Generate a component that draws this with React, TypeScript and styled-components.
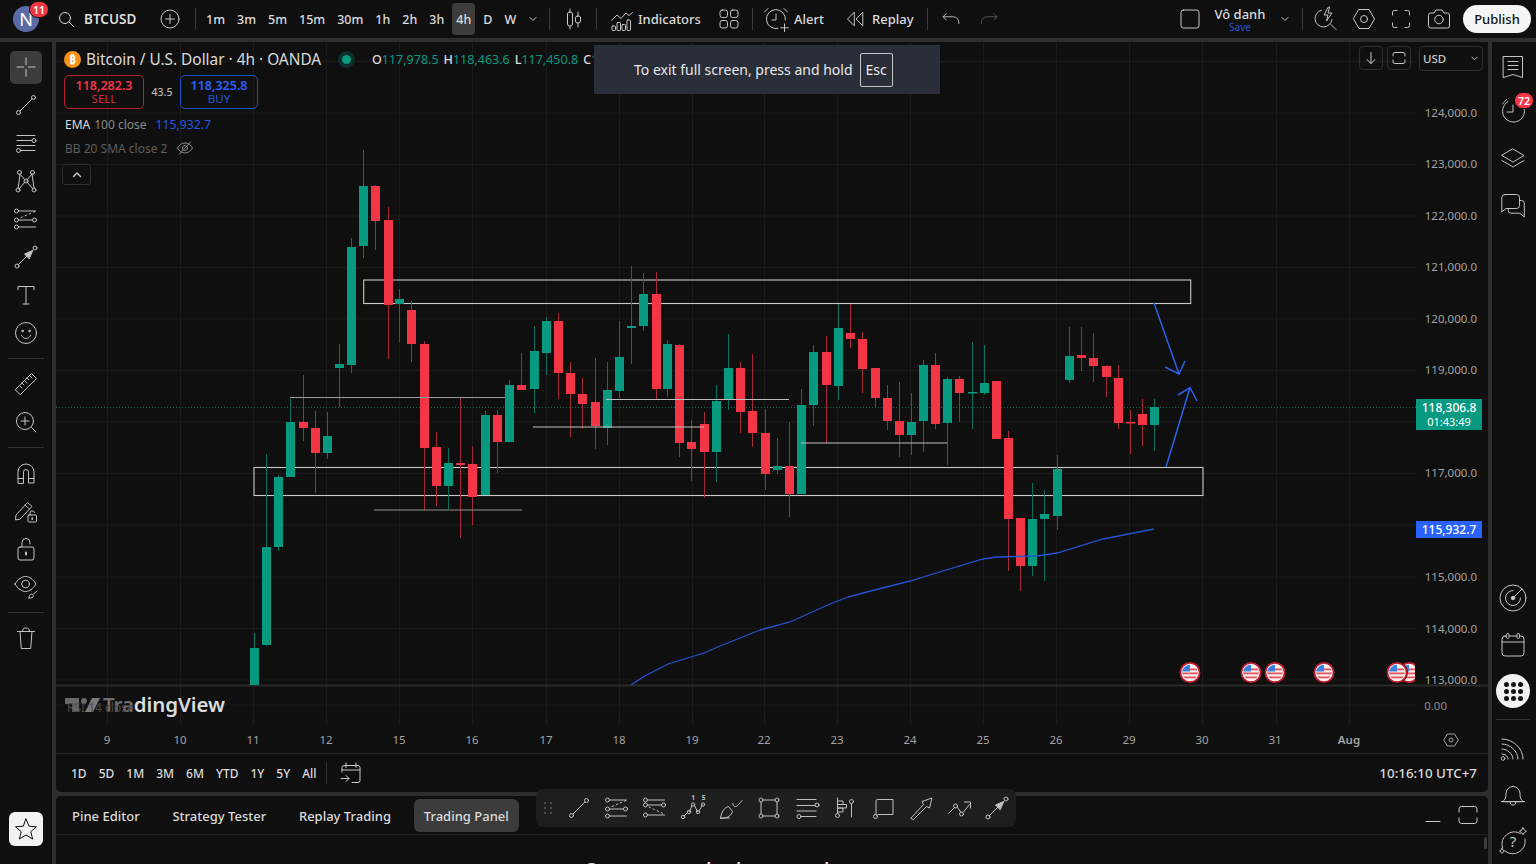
import React from 'react';
import styled, { createGlobalStyle } from 'styled-components';

const Global = createGlobalStyle`
  html, body { margin: 0; padding: 0; width: 100%; height: 100%; background: #2e2e2e; overflow: hidden; }
  #root { width: 1536px; height: 864px; }
  * { box-sizing: border-box; }
`;

const FONT = `"Noto Sans", "Open Sans", "Liberation Sans", sans-serif`;

const Page = styled.div`
  width: 1536px; height: 864px; display: flex; flex-direction: column; gap: 4px;
  background: #2e2e2e; font-family: ${FONT}; color: #dbdbdb; overflow: hidden;
`;

/* ---------- top bar ---------- */
const TopBar = styled.header`
  height: 38px; flex: none; display: flex; align-items: center; background: #0f0f0f; padding: 0 5px 0 13px;
`;
const Avatar = styled.div`
  position: relative; width: 26px; height: 26px; border-radius: 50%; background: #5a6aa6; color: #fff;
  display: flex; align-items: center; justify-content: center; font-size: 18px; flex: none;
`;
const CountBadge = styled.span<{ $right: number; $top: number }>`
  position: absolute; right: ${p => p.$right}px; top: ${p => p.$top}px; min-width: 18px; height: 17px; border-radius: 9px;
  background: #f23645; color: #fff; font-size: 10.5px; font-weight: 600; display: flex; align-items: center; justify-content: center;
  padding: 0 3px; border: 1px solid #0f0f0f;
`;
const Cell = styled.div<{ $w: number; $ml?: number; $dim?: boolean }>`
  width: ${p => p.$w}px; margin-left: ${p => p.$ml ?? 0}px; flex: none; display: flex; align-items: center; justify-content: center;
  color: ${p => (p.$dim ? '#5a5a5a' : '#c8c8c8')};
`;
const Symbol = styled.div<{ $ml: number }>`
  width: 79px; margin-left: ${p => p.$ml}px; flex: none; display: flex; align-items: center; gap: 9px;
  font-size: 13.5px; font-weight: 600; color: #dbdbdb; white-space: nowrap;
`;
const Sep = styled.div<{ $ml: number }>`
  width: 1px; height: 22px; background: #3a3a3a; margin-left: ${p => p.$ml}px; flex: none;
`;
const Intervals = styled.div`
  width: 318px; margin-left: 6px; flex: none; display: flex; align-items: center; gap: 4px;
`;
const IntervalBtn = styled.div<{ $on?: boolean }>`
  padding: 0 4px; height: 32px; display: flex; align-items: center; border-radius: 4px; font-size: 12.5px; font-weight: 500; white-space: nowrap;
  background: ${p => (p.$on ? '#3c3c3c' : 'transparent')}; color: #dbdbdb;
`;
const BarLabel = styled.div<{ $w: number; $ml: number }>`
  width: ${p => p.$w}px; margin-left: ${p => p.$ml}px; flex: none; font-size: 13px; font-weight: 500; white-space: nowrap; color: #dbdbdb;
`;
const RightTools = styled.div`
  margin-left: auto; display: flex; align-items: center;
`;
const NameCell = styled.div`
  width: 56px; margin-left: 8px; padding-top: 1px; flex: none; display: flex; flex-direction: column; align-items: center; line-height: 1;
`;
const NameTop = styled.span`font-size: 13px; font-weight: 500; color: #dbdbdb; white-space: nowrap;`;
const NameSave = styled.span`font-size: 10px; color: #2458d0; margin-top: 1px;`;
const Publish = styled.button`
  width: 68px; height: 28px; margin-left: 10px; border: 0; border-radius: 14px; background: #f5f5f5; color: #0f0f0f;
  font-family: ${FONT}; font-size: 13px; font-weight: 500; padding: 0;
`;

/* ---------- body ---------- */
const Body = styled.div`
  flex: 1; min-height: 0; display: flex; gap: 4px;
`;
const LeftRail = styled.nav`
  width: 52px; flex: none; background: #0f0f0f; display: flex; flex-direction: column; align-items: center; padding-top: 6px; color: #c4c4c4;
`;
const ToolBtn = styled.div<{ $on?: boolean }>`
  width: 32px; height: 38px; flex: none; display: flex; align-items: center; justify-content: center; position: relative; z-index: 0;
  ${p => p.$on ? `&::before { content: ""; position: absolute; z-index: -1; inset: 3px 0 2px; border-radius: 5px; background: #3c3c3c; }` : ''}
`;
const RailSep = styled.div`
  width: 36px; height: 1px; background: #333; margin: 6px 0; flex: none;
`;
const StarBtn = styled.div`
  width: 34px; height: 34px; margin-top: auto; margin-bottom: 18px; border-radius: 6px; background: #f2f2f2; color: #0f0f0f;
  display: flex; align-items: center; justify-content: center; flex: none;
`;
const Center = styled.main`
  flex: 1; min-width: 0; display: flex; flex-direction: column; gap: 4px;
`;
const ChartPane = styled.section`
  height: 750px; flex: none; background: #0f0f0f; border-radius: 0 0 5px 5px; display: flex; flex-direction: column; overflow: hidden;
`;
const ChartCanvas = styled.div`
  position: relative; height: 711px; flex: none; overflow: hidden;
`;
const ChartSvg = styled.svg`
  display: block; width: 1432px; height: 711px; font-family: ${FONT};
`;
const Legend = styled.div`
  position: absolute; left: 8px; top: 6px; display: flex; flex-direction: column; align-items: flex-start;
`;
const TitleRow = styled.div`
  height: 22px; display: flex; align-items: center; white-space: nowrap;
`;
const Title = styled.span`
  font-size: 15.4px; margin-left: 5px; color: #dbdbdb; width: 237px; white-space: nowrap;
`;
const StatusDot = styled.span`
  width: 9px; height: 9px; border-radius: 50%; background: #089981; box-shadow: 0 0 0 4px #0d2f29; margin-left: 19px; flex: none;
`;
const Ohlc = styled.span`
  margin-left: 21px; font-size: 12.5px; color: #089981; white-space: nowrap;
  b { font-weight: 500; color: #dbdbdb; }
  b + span { margin-right: 5px; }
`;
const TradeRow = styled.div`
  display: flex; align-items: center; margin-top: 5px; height: 34px;
`;
const TradeBox = styled.div<{ $c: string }>`
  width: ${p => (p.$c === 'sell' ? 80 : 78)}px; height: 34px; border-radius: 5px; border: 1px solid ${p => (p.$c === 'sell' ? '#b32431' : '#2250c0')};
  display: flex; flex-direction: column; align-items: center; justify-content: center; line-height: 14px;
  color: ${p => (p.$c === 'sell' ? '#f23645' : '#2962ff')}; font-size: 12.5px; font-weight: 600;
  span { display: block; font-size: 11.5px; line-height: 12px; font-weight: 400; color: ${p => (p.$c === 'sell' ? '#d92c3b' : '#2458d0')}; }
`;
const Spread = styled.div`
  width: 36px; text-align: center; font-size: 10.5px; font-weight: 500; color: #b8b8b8;
`;
const IndicatorRow = styled.div<{ $first?: boolean }>`
  height: 24px; display: flex; align-items: center; margin-top: ${p => (p.$first ? 3 : 0)}px; padding-left: 1px; font-size: 12px; white-space: nowrap; color: #8a8a8a;
`;
const EmaName = styled.span`color: #dbdbdb; margin-right: 4px;`;
const EmaVal = styled.span`color: #2458e0; margin-left: 9px; font-size: 12.2px;`;
const DimText = styled.span`color: #5e5e5e; margin-right: 9px;`;
const EyeWrap = styled.span`color: #8a8a8a; display: flex;`;
const Collapse = styled.div`
  width: 29px; height: 21px; margin: 4px 0 0 -2px; border: 1px solid #2e2e2e; border-radius: 3px; display: flex; align-items: center; justify-content: center; color: #cfcfcf;
`;
const Toast = styled.div`
  position: absolute; left: 538px; top: 3px; width: 346px; height: 49px; background: #2a2e39; color: #e8e8e8; z-index: 3;
  display: flex; align-items: center; justify-content: flex-start; gap: 7px; font-size: 14px; white-space: nowrap; padding-left: 40px;
`;
const EscKey = styled.span`
  width: 33px; height: 34px; border: 1.5px solid #c8c8c8; border-radius: 2px; display: flex; align-items: center; justify-content: center;
`;
const ChartControls = styled.div`
  position: absolute; right: 5px; top: 4px; display: flex; align-items: flex-start; gap: 4px; z-index: 2;
`;
const ControlBtn = styled.div`
  width: 24px; height: 24px; border: 1px solid #2e2e2e; border-radius: 4px; display: flex; align-items: center; justify-content: center; color: #c8c8c8; flex: none;
`;
const UsdSelect = styled.div`
  width: 64px; height: 25px; margin-left: 4px; border: 1px solid #2e2e2e; border-radius: 4px; display: flex; align-items: center; justify-content: space-between;
  padding: 0 3px 0 3px; font-size: 11.5px; color: #c8c8c8; font-weight: 500;
`;
const PriceTag = styled.div<{ $top: number; $bg: string; $h: number }>`
  position: absolute; left: 1360px; top: ${p => p.$top}px; width: 66px; height: ${p => p.$h}px; background: ${p => p.$bg}; color: #fff;
  font-size: 12px; line-height: 14px; font-weight: 500; display: flex; flex-direction: column; align-items: center; justify-content: center;
  span { font-size: 11px; line-height: 13px; font-weight: 400; }
`;
const Watermark = styled.div`
  position: absolute; left: 9px; top: 650px; display: flex; align-items: center; gap: 2px; font-size: 20.5px; font-weight: 600; color: #dcdcdc; line-height: 24px; letter-spacing: -0.1px;
`;
const WatermarkGrey = styled.span`color: #6e6e6e; font-weight: 600;`;
const GhostLabel = styled.span`
  position: absolute; left: 2px; top: 4px; font-size: 12px; font-weight: 400; color: #4a4a4a; letter-spacing: 0; white-space: nowrap;
`;

const RangeBar = styled.div`
  height: 39px; flex: none; border-top: 1px solid #2a2a2a; display: flex; align-items: center; padding: 0 11px 0 9px; position: relative;
`;
const RangeBtn = styled.div`
  padding: 0 6px; font-size: 12px; font-weight: 500; color: #dbdbdb; white-space: nowrap;
`;
const RangeSep = styled.div`
  width: 1px; height: 22px; background: #333; margin: 0 10px 0 3px; flex: none;
`;
const Clock = styled.div`
  margin-left: auto; font-size: 13.4px; font-weight: 500; color: #dbdbdb; white-space: nowrap;
`;

/* ---------- bottom pane ---------- */
const BottomPane = styled.section`
  flex: 1; min-height: 0; background: #0f0f0f; border-radius: 5px 5px 0 0; position: relative; overflow: visible;
`;
const TabRow = styled.div`
  height: 39px; border-bottom: 1px solid #222; display: flex; align-items: flex-start; padding: 3px 0 0 6px; gap: 12.8px;
`;
const Tab = styled.div<{ $on?: boolean }>`
  height: 33px; padding: 0 10px; display: flex; align-items: center; border-radius: 6px; font-size: 13px; font-weight: 500; white-space: nowrap;
  color: #dbdbdb; background: ${p => (p.$on ? '#3c3c3c' : 'transparent')};
`;
const DrawBar = styled.div`
  position: absolute; left: 480px; top: -7px; width: 480px; height: 38px; background: #1e1e1e; border-radius: 7px; display: flex; align-items: center; padding-left: 5px; z-index: 4; color: #c0c0c0;
`;
const Grip = styled.div`
  width: 14px; height: 16px; margin-right: 5px; display: grid; grid-template-columns: 2px 2px; grid-auto-rows: 2px; column-gap: 4px; row-gap: 3px; flex: none; align-content: center; justify-content: center;
  i { background: #4a4a4a; display: block; }
`;
const DrawTool = styled.div`
  width: 38px; height: 38px; flex: none; display: flex; align-items: center; justify-content: center;
`;
const PaneActions = styled.div`
  position: absolute; right: 6px; top: 5px; display: flex; align-items: center; gap: 7px; color: #c8c8c8;
`;
const Scrollbar = styled.div`
  position: absolute; right: 1px; top: 41px; width: 3px; height: 12px; background: #3c3c3c; border-radius: 2px;
`;
const PeekText = styled.div`
  position: absolute; left: 0; right: 0; top: 60px; text-align: center; font-size: 18px; font-weight: 600; color: #e0e0e0; height: 8px; overflow: hidden; line-height: 26px; padding-right: 120px;
`;

/* ---------- right rail ---------- */
const RightRail = styled.aside`
  width: 44px; flex: none; background: #0f0f0f; display: flex; flex-direction: column; align-items: center; color: #c4c4c4; padding: 0 2px 4px 0;
`;
const RailBtn = styled.div<{ $mt: number }>`
  position: relative; width: 38px; height: 38px; margin-top: ${p => p.$mt}px; flex: none; display: flex; align-items: center; justify-content: center;
`;
const RailPush = styled.div`flex: 1;`;
const AppsBtn = styled.div`
  width: 34px; height: 34px; border-radius: 50%; background: #f2f2f2; margin-top: 10px; flex: none; display: grid;
  grid-template-columns: repeat(3, 5px); grid-auto-rows: 5px; gap: 2px; align-content: center; justify-content: center;
  i { background: #111; border-radius: 50%; display: block; }
`;
const RightSep = styled.div`
  width: 34px; height: 1px; background: #333; margin-top: 11px; flex: none;
`;

/* ---------- icons ---------- */
const Svg = styled.svg.attrs<{ $s?: number; $vb?: number }>(p => ({
  viewBox: `0 0 ${p.$vb ?? 28} ${p.$vb ?? 28}`,
  fill: 'none',
  stroke: 'currentColor',
  strokeWidth: 1,
  strokeLinecap: 'round',
  strokeLinejoin: 'round',
}))<{ $s?: number; $vb?: number }>`
  width: ${p => p.$s ?? 28}px; height: ${p => p.$s ?? 28}px; display: block; flex: none;
`;
type IP = { s?: number };
const Dot = ({ x, y, r = 2 }: { x: number; y: number; r?: number }) => <circle cx={x} cy={y} r={r} />;

const ICrosshair = () => <Svg><path d="M14 4.5v7.5M14 16v7.5M4.5 14H12M16 14h7.5" strokeLinecap="butt" /></Svg>;
const ILine = () => <Svg><path d="M7.9 20.1 20.1 7.9" /><Dot x={6.5} y={21.5} /><Dot x={21.5} y={6.5} /></Svg>;
const IHLines = () => <Svg><path d="M5 6.5h18M5 11.5h15M5 16.5h18M8.5 21.5H23" /><Dot x={22} y={11.5} /><Dot x={6.5} y={21.5} /></Svg>;
const IPattern = () => <Svg><path d="M8 7l5 6M20 7l-5 6M8 7 6.2 21M20 7l2 14M7 22l6-7M21 22l-6-7" /><Dot x={7.5} y={5.5} /><Dot x={20.5} y={5.5} /><Dot x={14} y={14} /><Dot x={6} y={23} /><Dot x={22} y={23} /></Svg>;
const IFib = () => <Svg><path d="M6.5 6h17M6.5 15h14M6.5 22h17" /><path d="M9 12.5l14-6" strokeDasharray="1.5 3" /><Dot x={4.5} y={6} /><Dot x={4.5} y={15} /><Dot x={22.5} y={15} /><Dot x={4.5} y={22} /></Svg>;
const IFib2 = () => <Svg><path d="M6.5 6h17M6.5 11h14M6.5 21h17" /><path d="M8 13l15 7" strokeDasharray="1.5 3" /><Dot x={4.5} y={6} /><Dot x={4.5} y={11} /><Dot x={22.5} y={11} /><Dot x={4.5} y={21} /></Svg>;
const IArrowLine = () => <Svg><path d="M6.4 21.6 19 9" /><Dot x={5} y={23} /><Dot x={23} y={5} /><path d="M20.5 7.5 12.5 11l4.5 4.5z" fill="currentColor" /></Svg>;
const IText = () => <Svg><path d="M6 8.5V5.5h16v3M14 5.5V23M11 23h6" /></Svg>;
const ISmile = () => <Svg><circle cx="14" cy="14" r="10.5" /><circle cx="10.5" cy="12" r=".8" fill="currentColor" /><circle cx="17.5" cy="12" r=".8" fill="currentColor" /><path d="M9.5 16.5c1.200 2 2.700 3 4.500 3s3.300-1 4.500-3" /></Svg>;
const IRuler = () => <Svg><path d="M3.500 19.500 19.500 3.500 24.500 8.500 8.500 24.500zM7.500 15.500l2.500 2.500M10 13l1.800 1.800M12.500 10.500l2.500 2.500M15 8l1.800 1.800M17.500 5.500 20 8" /></Svg>;
const IZoom = () => <Svg><circle cx="13" cy="13" r="8.500" /><path d="M13 9v8M9 13h8M19.500 19.500l4.500 4.500" /></Svg>;
const IMagnet = () => <Svg><path d="M6 24V13a8 8 0 0 1 16 0v11h-5.500V13a2.500 2.500 0 0 0-5 0v11zM6 19.500h5.500M16.500 19.500H22" /></Svg>;
const IPencilLock = () => <Svg><path d="M3.500 22.500 4 18 15.500 5.500 20 9.500 8 22z M13 8l4.500 4" /><rect x="16" y="18" width="8.500" height="7" rx="1" /><path d="M18 18v-2a2.300 2.300 0 0 1 4.500-.5" /><path d="M20.200 21v1.200" strokeWidth="1.600" /></Svg>;
const ILock = () => <Svg><rect x="6" y="12" width="16" height="13" rx="2" /><path d="M10 12V7.500a4 4 0 0 1 8 0V9" /><path d="M14 17.500v2" strokeWidth="2" /></Svg>;
const IEyeBrush = () => <Svg><path d="M3 11c3-5 7-7.500 10.500-7.500S21 6 24 11c-3 5-7 7.500-10.500 7.500S6 16 3 11z" /><circle cx="13.500" cy="11" r="3.800" /><path d="M17 25c0-2.500 1-3.500 2.800-4l1.700 1.700c-.5 2-2 2.500-4.500 2.300zM21.500 21l3.500-3" /></Svg>;
const ITrash = () => <Svg><path d="M5.500 7.500h17M8 7.500l1.300 17h9.400l1.300-17M10.500 7.500c0-2.500 1-3.500 3.500-3.500s3.500 1 3.500 3.500" /></Svg>;
const IStar = () => <Svg><path d="M14 4l3 7.200 7.500.6-5.700 4.900 1.800 7.300-6.600-4-6.600 4 1.800-7.300-5.700-4.900 7.500-.6z" /></Svg>;

const ISearch = () => <Svg $s={18} $vb={18}><circle cx="8" cy="8" r="5.500" /><path d="M12 12l4.500 4.500" /></Svg>;
const IPlusCircle = () => <Svg $s={20} $vb={20}><circle cx="10" cy="10" r="9" /><path d="M10 5.500v9M5.500 10h9" /></Svg>;
const IChevron = ({ s = 10 }: IP) => <Svg $s={s} $vb={10}><path d="M2 3.500 5 6.500 8 3.500" /></Svg>;
const ICandles = () => <Svg><path d="M10 4v3M10 21v3M18 7v4M18 18v4" /><rect x="7.500" y="7" width="5" height="14" rx="2" /><rect x="15.500" y="11" width="5" height="7" rx="2" /></Svg>;
const IIndicators = () => <Svg><path d="M4.500 15.500 10 10l4 3.500 5-5.500 3 2.500 3.500-3" /><rect x="5" y="21" width="3.500" height="4.500" rx=".8" /><rect x="10" y="17.500" width="3.500" height="8" rx=".8" /><rect x="15" y="19.500" width="3.500" height="6" rx=".8" /><rect x="20" y="15" width="3.500" height="10.500" rx=".8" /></Svg>;
const IGrid = () => <Svg><rect x="5" y="5" width="7.500" height="7.500" rx="2.200" /><rect x="15.500" y="5" width="7.500" height="7.500" rx="2.200" /><rect x="5" y="15.500" width="7.500" height="7.500" rx="2.200" /><rect x="15.500" y="15.500" width="7.500" height="7.500" rx="2.200" /></Svg>;
const IAlarm = () => <Svg><path d="M16 23.400A9.500 9.500 0 1 1 23.400 15" /><path d="M14 9v6h-4M2.500 7 6 3.500M25.500 7 22 3.500M22.500 19v7.500M18.800 22.800h7.500" /></Svg>;
const IRewind = () => <Svg><path d="M13 7.500 6.500 14l6.500 6.500zM21.500 7.500 15 14l6.500 6.500z" /></Svg>;
const IUndo = () => <Svg><path d="M8 8.500 4.500 12 8 15.500M5 12h11a6 6 0 0 1 6 6v1.500" transform="translate(2 1) scale(.9)" /></Svg>;
const IRedo = () => <Svg><path d="M20 8.500 23.500 12 20 15.500M23 12H12a6 6 0 0 0-6 6v1.500" transform="translate(1 1) scale(.9)" /></Svg>;
const ISquare = () => <Svg $s={20} $vb={20}><rect x="1" y="1" width="18" height="18" rx="2.500" /></Svg>;
const IBoltSearch = () => <Svg><path d="M10.500 5.200A8.500 8.500 0 1 0 21 14.500M20 19.500l5 5" /><path d="M17 2.500l-4 7.500h4l-1.500 6 5.500-8h-4l1.500-5.500z" /></Svg>;
const IHex = ({ s = 28 }: IP) => <Svg $s={s}><path d="M9 4.500h10l5.500 9.500-5.500 9.500H9L3.500 14z" /><circle cx="14" cy="14" r="3.500" /></Svg>;
const IFull = () => <Svg><path d="M5.500 10V7.500a2 2 0 0 1 2-2H10M18 5.500h2.500a2 2 0 0 1 2 2V10M22.500 18v2.500a2 2 0 0 1-2 2H18M10 22.500H7.500a2 2 0 0 1-2-2V18" /></Svg>;
const ICamera = () => <Svg><path d="M3.500 10a2 2 0 0 1 2-2h3.500l2-3h6l2 3h3.500a2 2 0 0 1 2 2v11a2 2 0 0 1-2 2h-17a2 2 0 0 1-2-2z" /><circle cx="14" cy="14.500" r="4.300" /></Svg>;

const IWatch = () => <Svg><path d="M4.500 3.500h19v21L14 21.500l-9.500 3zM9 8.500h10M9 12.500h10M9 16.500h10" /></Svg>;
const IClockAlert = () => <Svg><path d="M9 5.500A11 11 0 1 0 19 5M14 9v7H8M3.500 8 7.500 3.500" /></Svg>;
const ILayers = () => <Svg><path d="M14 5l11 6.500-11 6.500L3 11.500zM3 16.500 14 23l11-6.500" /></Svg>;
const IChat = () => <Svg><path d="M6 3.500h11.500a3 3 0 0 1 3 3v8a3 3 0 0 1-3 3H7L2.800 21V6.500a3 3 0 0 1 3-3zM20.500 9.500h2a2.800 2.800 0 0 1 2.800 2.800V26l-4.500-3.800H12a2.800 2.800 0 0 1-2.800-2.800v-1.900" /></Svg>;
const IRadar = () => <Svg><circle cx="14" cy="14" r="13" /><path d="M14 6.500a7.500 7.500 0 1 0 7.500 7.500M14 14 23 5" /><circle cx="14" cy="14" r="1.800" fill="currentColor" /></Svg>;
const ICalendar = () => <Svg><rect x="3" y="5" width="22" height="20" rx="3" /><path d="M3 11h22" /><rect x="7.500" y="2.500" width="2.500" height="5" rx="1.200" fill="#0f0f0f" /><rect x="18" y="2.500" width="2.500" height="5" rx="1.200" fill="#0f0f0f" /></Svg>;
const IRss = () => <Svg><path d="M3 5c11 0 21 9 21 20M3 10c8 0 16 7 16 15M3 15c5 0 11 4.500 11 10M3 20c3 0 6 2 6 5" /><circle cx="4" cy="24.500" r="1.800" /></Svg>;
const IBell = () => <Svg><path d="M4 21.500c2.500-2 3-4 3-8a7 7 0 0 1 14 0c0 4 .5 6 3 8zM11 21.500c0 2.500 1.300 3.500 3 3.500s3-1 3-3.500M2.500 21.500h23" /></Svg>;
const IHelp = () => <Svg><path d="M21.500 6.500A12.500 12.500 0 0 0 3.500 21M6 24a12.500 12.500 0 0 0 20-12" /><text x="14" y="20" fontSize="15" textAnchor="middle" fill="currentColor" stroke="none" fontFamily="Noto Sans">?</text><path d="M24 .8 25.300 3 27.500 4.300 25.300 5.600 24 7.800 22.700 5.600 20.500 4.300 22.700 3zM3 21.500l1 1.500 1.500 1-1.500 1-1 1.500-1-1.500-1.500-1 1.500-1z" /></Svg>;

const IDown = () => <Svg $s={16} $vb={16}><path d="M8 2.500v11M4 9.500l4 4 4-4" /></Svg>;
const IRefresh = () => <Svg $s={18} $vb={18}><path d="M3 7V5.500a2 2 0 0 1 2-2h8a2 2 0 0 1 2 2V7M3 11v1.500a2 2 0 0 0 2 2h8a2 2 0 0 0 2-2V11" /></Svg>;
const IEyeOff = () => <Svg $s={18} $vb={18}><path d="M1.500 9c2-3.300 4.500-5 7.500-5s5.500 1.700 7.500 5c-2 3.300-4.500 5-7.500 5s-5.500-1.700-7.500-5zM14.500 3 3.500 15" /><circle cx="9" cy="9" r="2.500" /></Svg>;
const IUp = () => <Svg $s={12} $vb={12}><path d="M2.500 7.500 6 4l3.500 3.500" strokeWidth="1.400" /></Svg>;
const IGoTo = () => <Svg><path d="M5 13V8.500a2 2 0 0 1 2-2h14a2 2 0 0 1 2 2v13a2 2 0 0 1-2 2h-6M5 11h18M9 4v4.500M19 4v4.500M4 19.500h8M9 16.500l3 3-3 3" /></Svg>;
const IMin = () => <Svg $s={28}><path d="M7 20.500h14" /></Svg>;
const IRestore = () => <Svg $s={28}><path d="M5 11V8a2.500 2.500 0 0 1 2.500-2.500h13A2.500 2.500 0 0 1 23 8v3M5 17v3a2.500 2.500 0 0 0 2.500 2.500h13A2.500 2.500 0 0 0 23 20v-3" /></Svg>;

const BitcoinMark = styled.svg`width: 17px; height: 17px; flex: none;`;
const IBitcoin = () => (
  <BitcoinMark viewBox="0 0 17 17">
    <circle cx="8.500" cy="8.500" r="8.500" fill="#f7931a" />
    <text x="8.500" y="12.500" fontSize="11.500" fontWeight="700" fill="#fff" textAnchor="middle" fontFamily="Noto Sans">₿</text>
  </BitcoinMark>
);
const TvMark = styled.svg`width: 36px; height: 18px; flex: none;`;
const ITV = () => (
  <TvMark viewBox="0 0 36 18">
    <path d="M0 3h14v14H7V9H0z" fill="#6a6a6a" />
    <circle cx="19" cy="6" r="3" fill="#6a6a6a" />
    <path d="M27 3h8l-7 14h-8z" fill="#7a7a7a" />
  </TvMark>
);
const I15 = () => (
  <Svg>
    <path d="M5 22l4-4M10.500 17.500l2.500-6M15.500 11.500l3 6M20 17l3.500-6" />
    <Dot x={4} y={23} r={1.700} /><Dot x={10} y={18} r={1.700} /><Dot x={14} y={10.500} r={1.700} /><Dot x={19} y={18} r={1.700} /><Dot x={24} y={10.500} r={1.700} />
    <text x="14" y="6" fontSize="6.500" fontWeight="700" textAnchor="middle" fill="currentColor" stroke="none" fontFamily="Noto Sans">1</text>
    <text x="24.500" y="6" fontSize="6.500" fontWeight="700" textAnchor="middle" fill="currentColor" stroke="none" fontFamily="Noto Sans">5</text>
  </Svg>
);
const IBrush = () => <Svg><path d="M3.500 24c1-5.500 3-10 8-11.500l4 5c-1 3.500-4 6-8 6.500zM3.500 24h9M16 9.500c0 3 1.500 3.500 3 3 2-.7 3.500-3 6-6" /></Svg>;
const IRect = () => <Svg><path d="M6 8v12M22 8v12M8 6h12M8 22h12" /><Dot x={6} y={6} /><Dot x={22} y={6} /><Dot x={6} y={22} /><Dot x={22} y={22} /></Svg>;
const ILines4 = () => <Svg><path d="M4 5.500h19M4 11.500h18M4 17h19M8 22.500h15" /><Dot x={24} y={11} /><Dot x={6} y={22.500} /></Svg>;
const IFork = () => <Svg><path d="M6.500 19.500V4M6.500 7H12v3.500H6.500M6.500 10.500h9V14h-9M6.500 14H12v4H6.500M20.500 10v13" /><Dot x={6.500} y={21.500} /><Dot x={20.500} y={7.500} /></Svg>;
const ICallout = () => <Svg><path d="M7 20.500V7a1.500 1.500 0 0 1 1.500-1.500H24v15H9" /><Dot x={6.500} y={22.500} /></Svg>;
const IArrowOutline = () => <Svg><path d="M4 24 16.500 10.500l-1.500-3L25 4l-2.500 10-3-1.500L6.500 25.500z" /></Svg>;
const IPath = () => <Svg><path d="M3.500 19.500l6-6M12.500 13.500l3.500 5M18.500 18l6-7.500M19.500 8h6v6" /><Dot x={10.500} y={12} /><Dot x={16.500} y={20} /></Svg>;

/* ---------- chart data ---------- */
type C = [number, number, number, number, number, 'g' | 'r'];
const CANDLES: C[] = [
  [254,633,685,648,685,'g'],[266,454,646,547,645,'g'],[278,475,551,477,547,'g'],[290,399,477,422,477,'g'],
  [303,375,441,422,428,'r'],[315,411,493,428,453,'r'],[327,412,459,436,453,'g'],[339,344,407,364,368,'g'],
  [351,238,373,247,365,'g'],[363,150,258,186,246,'g'],[375,185,250,186,221,'r'],[388,207,359,220,305,'r'],
  [399,289,342,299,304,'g'],[411,301,362,310,344,'r'],[424,341,510,344,448,'r'],[436,432,506,447,486,'r'],
  [448,448,509,463,486,'g'],[460,397,538,463,465,'r'],[472,446,525,464,497,'r'],[485,411,495,415,495,'g'],
  [497,410,473,415,442,'r'],[509,380,442,385,442,'g'],[521,353,390,385,390,'r'],[534,326,413,351,389,'g'],
  [546,317,375,321,353,'g'],[558,313,399,321,373,'r'],[570,362,437,373,394,'r'],[582,378,429,394,404,'r'],
  [595,358,449,402,426,'r'],[607,362,445,390,428,'g'],[619,321,398,357,391,'g'],[631,266,364,326,328,'g'],
  [643,273,331,294,326,'g'],[656,272,400,294,389,'r'],[667,340,397,344,389,'g'],[679,344,457,345,443,'r'],
  [691,420,481,442,449,'r'],[704,412,498,424,452,'r'],[716,385,482,401,452,'g'],[728,334,410,368,400,'g'],
  [740,362,433,368,412,'r'],[752,354,447,411,433,'r'],[765,409,490,433,474,'r'],[777,438,474,466,470,'g'],
  [789,422,517,466,494,'r'],[801,389,494,405,494,'g'],[813,345,426,352,405,'g'],[826,336,443,352,385,'r'],
  [838,304,400,328,386,'g'],[850,304,348,333,339,'r'],[862,332,393,339,369,'r'],[875,368,407,368,398,'r'],
  [887,385,430,398,421,'r'],[899,382,457,421,435,'r'],[911,393,455,422,435,'g'],[923,360,452,365,421,'g'],
  [935,353,429,365,424,'r'],[947,377,465,379,423,'g'],[959,376,422,379,393,'r'],[972,342,429,392,393,'g'],
  [984,345,395,383,393,'g'],[996,381,439,381,439,'r'],[1008,431,571,438,519,'r'],[1020,518,591,518,566,'r'],
  [1032,483,576,519,566,'g'],[1044,490,581,514,519,'g'],[1057,455,530,469,516,'g'],[1069,327,383,356,380,'g'],
  [1081,327,371,355,358,'r'],[1093,333,382,358,366,'r'],[1106,365,397,366,377,'r'],[1118,365,429,378,423,'r'],
  [1130,410,454,422,423,'r'],[1142,399,446,414,425,'r'],[1154,399,451,407,425,'g'],
];
const GRID_X = [107,180,253,326,399,472,546,619,692,764,837,910,983,1056,1129,1202,1276,1349];
const TIME = [['9',107],['10',180],['11',253],['12',326],['15',399],['16',472],['17',546],['18',619],['19',692],['22',764],['23',837],['24',910],['25',983],['26',1056],['29',1129],['30',1202],['31',1275],['Aug',1349]] as [string, number][];
const PRICES = [['124,000.0',113],['123,000.0',164],['122,000.0',216],['121,000.0',267],['120,000.0',319],['119,000.0',370],['117,000.0',473],['115,000.0',577],['114,000.0',628.500],['113,000.0',680]] as [string, number][];
const GRID_Y = [61.500,113,164.500,216,267.500,319,370.500,422,473.500,525,577,628.500,680,705];
const EMA = '631,685 643,677 668,664 704,653 720,646 760,630 790,622 830,604 848,597 863,593 910,581 933,574 983,559 997,557 1037,556 1057,553 1103,539 1154,529';
const FLAGS = [1409,1397,1324,1275,1251,1190];
const HLINES: [number, number, number, string][] = [
  [290,505,397.500,'#9a9a9a'],[606,789,399.500,'#bdbdbd'],[533,704,427,'#c4c4c4'],[374,522,510,'#8f8f8f'],[801,947,443,'#bdbdbd'],
];

const Flag = ({ x }: { x: number }) => (
  <g transform={`translate(${x} 672.500)`}>
    <circle r="10.800" fill="#0f0f0f" />
    <circle r="9.600" fill="#f4f4f4" stroke="#c21f2e" strokeWidth="1.800" />
    <g clipPath="url(#flagClip)">
      <rect x="-9" y="-4" width="18" height="1.800" fill="#e8505c" />
      <rect x="-9" y="0" width="18" height="1.800" fill="#e8505c" />
      <rect x="-9" y="4" width="18" height="1.800" fill="#e8505c" />
      <rect x="-9" y="-9" width="9" height="8" fill="#3d7fe0" />
    </g>
  </g>
);

const Chart = () => (
  <ChartSvg viewBox="56 42 1432 711">
    <defs>
      <clipPath id="flagClip"><circle r="7.800" /></clipPath>
      <clipPath id="plotClip"><rect x="56" y="42" width="1359" height="643" /></clipPath>
    </defs>
    {GRID_X.map(x => <line key={x} x1={x + 0.5} x2={x + 0.5} y1={42} y2={725} stroke="#1b1b1b" />)}
    {GRID_Y.map(y => <line key={y} x1={56} x2={1415} y1={y} y2={y} stroke="#1b1b1b" />)}
    <line x1={56} x2={1488} y1={685.500} y2={685.500} stroke="#2a2a2a" strokeWidth="2" />
    <rect x="363.700" y="280" width="827" height="23.500" fill="none" stroke="#c8c8c8" strokeWidth="1.100" />
    <rect x="254" y="467.500" width="949" height="28" fill="none" stroke="#c8c8c8" strokeWidth="1.100" />
    <line x1={56} x2={1416} y1={407.500} y2={407.500} stroke="#089981" strokeDasharray="1 2" opacity=".65" />
    <g clipPath="url(#plotClip)">
      {CANDLES.map(([x, wt, wb, bt, bb, k]) => (
        <g key={x}>
          <line x1={x + 0.5} x2={x + 0.5} y1={wt} y2={wb} stroke={k === 'g' ? '#0a6f5e' : '#a32b38'} />
          <rect x={x - 4} y={bt} width={9} height={Math.max(bb - bt, 1.500)} fill={k === 'g' ? '#089981' : '#f23645'} />
        </g>
      ))}
    </g>
    {HLINES.map(([a, b, y, c]) => <line key={a} x1={a} x2={b} y1={y} y2={y} stroke={c} strokeWidth="1.100" />)}
    <g clipPath="url(#plotClip)">
      <polyline points={EMA} fill="none" stroke="#2453cf" strokeWidth="1.300" />
    </g>
    <path d="M1154 303 1179 374M1165 367 1179 374 1185 361M1166 467 1190 387.500M1178 395 1190 387.500 1197 401" fill="none" stroke="#2a62e8" strokeWidth="1.500" />
    <svg x="56" y="42" width="1359" height="643" viewBox="56 42 1359 643">
      {FLAGS.map(x => <Flag key={x} x={x} />)}
    </svg>
    {PRICES.map(([t, y]) => <text key={t} x={1477} y={y + 4} textAnchor="end" fontSize="11.500" fill="#a3a3a3">{t}</text>)}
    <text x={1447} y={709.500} textAnchor="end" fontSize="11.500" fill="#8a8a8a">0.00</text>
    {TIME.map(([t, x]) => <text key={t} x={x} y={744} textAnchor="middle" fontSize="11.500" fontWeight={t === 'Aug' ? 600 : 400} fill="#a3a3a3">{t}</text>)}
    <g transform="translate(1443 732)"><path d="M4.500 2h7l3.800 6-3.800 6h-7L.7 8z" fill="none" stroke="#a3a3a3" /><circle cx="8" cy="8" r="2" fill="none" stroke="#a3a3a3" /></g>
  </ChartSvg>
);

const RANGES = ['1D', '5D', '1M', '3M', '6M', 'YTD', '1Y', '5Y', 'All'];
const TF = ['1m', '3m', '5m', '15m', '30m', '1h', '2h', '3h', '4h', 'D', 'W'];
const LEFT_A = [ILine, IHLines, IPattern, IFib, IArrowLine, IText, ISmile];
const DRAW = [ILine, IFib, IFib2, I15, IBrush, IRect, ILines4, IFork, ICallout, IArrowOutline, IPath, IArrowLine];

export default function App() {
  return (
    <Page>
      <Global />
      <TopBar>
        <Avatar>N<CountBadge $right={-10} $top={-5}>11</CountBadge></Avatar>
        <Symbol $ml={18}><ISearch />BTCUSD</Symbol>
        <Cell $w={28} $ml={20}><IPlusCircle /></Cell>
        <Sep $ml={11} />
        <Intervals>{TF.map(t => <IntervalBtn key={t} $on={t === '4h'}>{t}</IntervalBtn>)}</Intervals>
        <Cell $w={20} $ml={3}><IChevron /></Cell>
        <Sep $ml={6} />
        <Cell $w={28} $ml={10}><ICandles /></Cell>
        <Sep $ml={8} />
        <Cell $w={28} $ml={10}><IIndicators /></Cell>
        <BarLabel $w={62} $ml={3}>Indicators</BarLabel>
        <Cell $w={28} $ml={15}><IGrid /></Cell>
        <Sep $ml={9} />
        <Cell $w={28} $ml={9}><IAlarm /></Cell>
        <BarLabel $w={32} $ml={4}>Alert</BarLabel>
        <Cell $w={28} $ml={15}><IRewind /></Cell>
        <BarLabel $w={42} $ml={3}>Replay</BarLabel>
        <Sep $ml={13} />
        <Cell $w={28} $ml={9}><IUndo /></Cell>
        <Cell $w={28} $ml={10} $dim><IRedo /></Cell>
        <RightTools>
          <Cell $w={28}><ISquare /></Cell>
          <NameCell><NameTop>Vô danh</NameTop><NameSave>Save</NameSave></NameCell>
          <Cell $w={20} $ml={7}><IChevron /></Cell>
          <Sep $ml={7} />
          <Cell $w={28} $ml={8}><IBoltSearch /></Cell>
          <Cell $w={28} $ml={11}><IHex /></Cell>
          <Cell $w={28} $ml={9}><IFull /></Cell>
          <Cell $w={28} $ml={10}><ICamera /></Cell>
          <Publish>Publish</Publish>
        </RightTools>
      </TopBar>
      <Body>
        <LeftRail>
          <ToolBtn $on><ICrosshair /></ToolBtn>
          {LEFT_A.map((I, i) => <ToolBtn key={i}><I /></ToolBtn>)}
          <RailSep />
          <ToolBtn><IRuler /></ToolBtn>
          <ToolBtn><IZoom /></ToolBtn>
          <RailSep />
          <ToolBtn><IMagnet /></ToolBtn>
          <ToolBtn><IPencilLock /></ToolBtn>
          <ToolBtn><ILock /></ToolBtn>
          <ToolBtn><IEyeBrush /></ToolBtn>
          <RailSep />
          <ToolBtn><ITrash /></ToolBtn>
          <StarBtn><IStar /></StarBtn>
        </LeftRail>
        <Center>
          <ChartPane>
            <ChartCanvas>
              <Chart />
              <Legend>
                <TitleRow>
                  <IBitcoin />
                  <Title>Bitcoin / U.S. Dollar · 4h · OANDA</Title>
                  <StatusDot />
                  <Ohlc><b>O</b><span>117,978.5</span><b>H</b><span>118,463.6</span><b>L</b><span>117,450.8</span><b>C</b><span>118,306.8</span></Ohlc>
                </TitleRow>
                <TradeRow>
                  <TradeBox $c="sell">118,282.3<span>SELL</span></TradeBox>
                  <Spread>43.5</Spread>
                  <TradeBox $c="buy">118,325.8<span>BUY</span></TradeBox>
                </TradeRow>
                <IndicatorRow $first><EmaName>EMA</EmaName>100 close<EmaVal>115,932.7</EmaVal></IndicatorRow>
                <IndicatorRow><DimText>BB 20 SMA close 2</DimText><EyeWrap><IEyeOff /></EyeWrap></IndicatorRow>
                <Collapse><IUp /></Collapse>
              </Legend>
              <Toast>To exit full screen, press and hold<EscKey>Esc</EscKey></Toast>
              <ChartControls>
                <ControlBtn><IDown /></ControlBtn>
                <ControlBtn><IRefresh /></ControlBtn>
                <UsdSelect>USD<IChevron s={9} /></UsdSelect>
              </ChartControls>
              <PriceTag $top={357} $h={31} $bg="#089981">118,306.8<span>01:43:49</span></PriceTag>
              <PriceTag $top={479} $h={17} $bg="#2962ff">115,932.7</PriceTag>
              <Watermark>
                <GhostLabel>RSI 14 close</GhostLabel>
                <ITV />
                <span><WatermarkGrey>Tra</WatermarkGrey>dingView</span>
              </Watermark>
            </ChartCanvas>
            <RangeBar>
              {RANGES.map(r => <RangeBtn key={r}>{r}</RangeBtn>)}
              <RangeSep />
              <Cell $w={28}><IGoTo /></Cell>
              <Clock>10:16:10 UTC+7</Clock>
            </RangeBar>
          </ChartPane>
          <BottomPane>
            <TabRow>
              <Tab>Pine Editor</Tab>
              <Tab>Strategy Tester</Tab>
              <Tab>Replay Trading</Tab>
              <Tab $on>Trading Panel</Tab>
            </TabRow>
            <DrawBar>
              <Grip>{[0, 1, 2, 3, 4, 5].map(i => <i key={i} />)}</Grip>
              {DRAW.map((I, i) => <DrawTool key={i}><I /></DrawTool>)}
            </DrawBar>
            <PaneActions><IMin /><IRestore /></PaneActions>
            <Scrollbar />
            <PeekText>Connect your broker to trade</PeekText>
          </BottomPane>
        </Center>
        <RightRail>
          <RailBtn $mt={6}><IWatch /></RailBtn>
          <RailBtn $mt={5}><IClockAlert /><CountBadge $right={-2} $top={1}>72</CountBadge></RailBtn>
          <RailBtn $mt={10}><ILayers /></RailBtn>
          <RailBtn $mt={9}><IChat /></RailBtn>
          <RailPush />
          <RailBtn $mt={0}><IRadar /></RailBtn>
          <RailBtn $mt={9}><ICalendar /></RailBtn>
          <AppsBtn>{Array.from({ length: 9 }, (_, i) => <i key={i} />)}</AppsBtn>
          <RightSep />
          <RailBtn $mt={9}><IRss /></RailBtn>
          <RailBtn $mt={8}><IBell /></RailBtn>
          <RailBtn $mt={9}><IHelp /></RailBtn>
        </RightRail>
      </Body>
    </Page>
  );
}
